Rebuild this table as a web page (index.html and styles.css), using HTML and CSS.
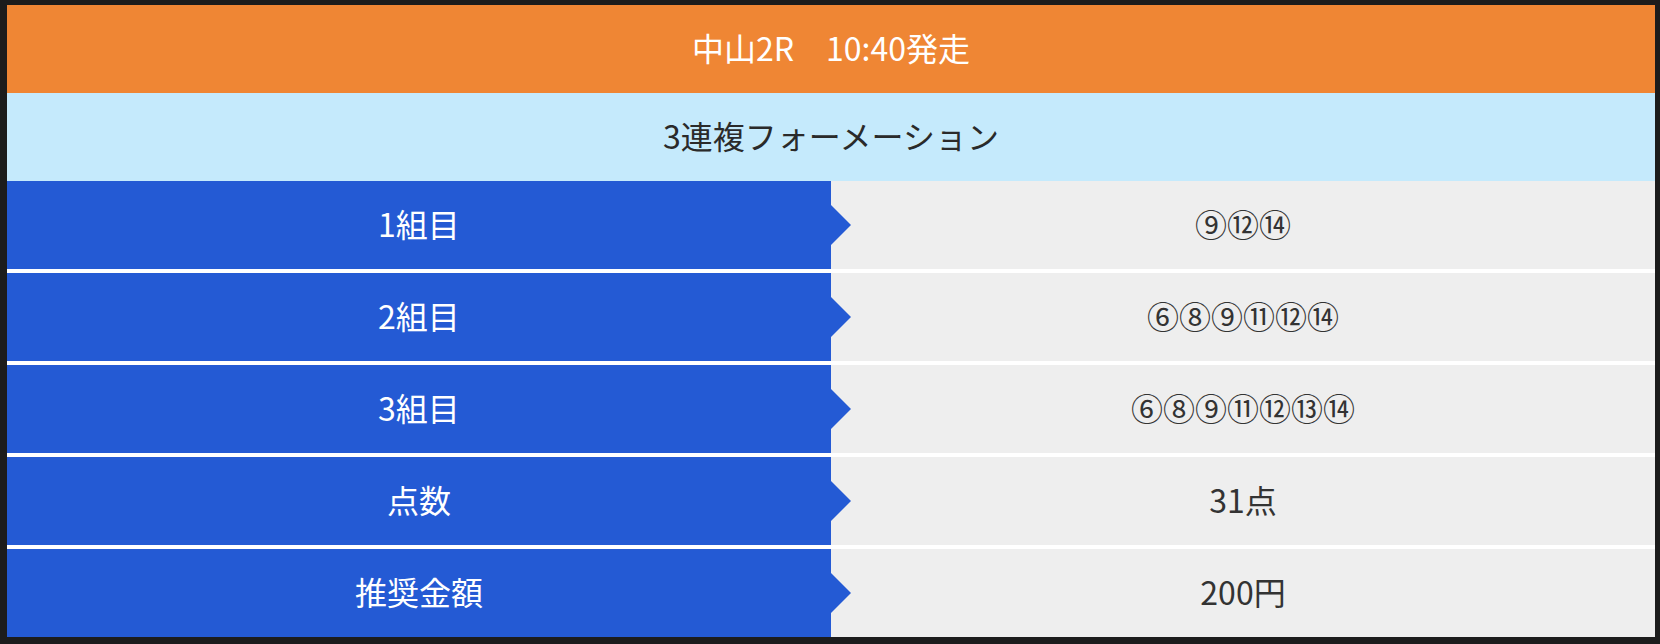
FILE: index.html
```html
<!DOCTYPE html>
<html lang="ja">
<head>
<meta charset="utf-8">
<link rel="stylesheet" href="styles.css">
</head>
<body>
<div class="card">
  <div class="title">中山2R　10:40発走</div>
  <div class="subtitle">3連複フォーメーション</div>
  <div class="rows">
    <div class="row"><div class="label">1組目</div><div class="value">⑨⑫⑭</div></div>
    <div class="row"><div class="label">2組目</div><div class="value">⑥⑧⑨⑪⑫⑭</div></div>
    <div class="row"><div class="label">3組目</div><div class="value">⑥⑧⑨⑪⑫⑬⑭</div></div>
    <div class="row"><div class="label">点数</div><div class="value">31点</div></div>
    <div class="row"><div class="label">推奨金額</div><div class="value">200円</div></div>
  </div>
</div>
</body>
</html>
```
FILE: styles.css
```css
html, body {
  margin: 0;
  background: #1c1c1c;
}
body {
  padding: 5px 5px 7px 7px;
  font-family: "Noto Sans CJK JP", "Noto Sans", sans-serif;
  font-size: 32px;
  line-height: 1.4;
}
.card {
  width: 1648px;
}
.title, .subtitle, .label, .value {
  box-sizing: border-box;
  height: 88px;
  padding-bottom: 4px;
  display: flex;
  align-items: center;
  justify-content: center;
}
.title {
  background: #ef8634;
  color: #ffffff;
}
.subtitle {
  background: #c5eafc;
  color: #2a2a2a;
}
.rows {
  display: grid;
  gap: 4px;
  background: #ffffff;
}
.row {
  display: grid;
  grid-template-columns: 824px 1fr;
}
.label {
  position: relative;
  background: #245ad4;
  color: #ffffff;
}
.label::after {
  content: "";
  position: absolute;
  right: -20px;
  top: 50%;
  margin-top: -20px;
  border-left: 20px solid #245ad4;
  border-top: 20px solid transparent;
  border-bottom: 20px solid transparent;
}
.value {
  background: #eeeeee;
  color: #333333;
}
```
